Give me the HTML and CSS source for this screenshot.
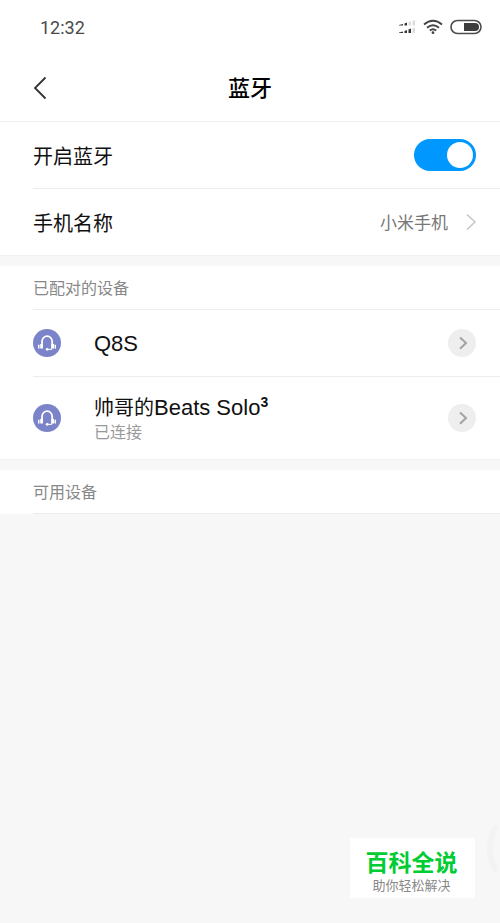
FILE: index.html
```html
<!DOCTYPE html>
<html lang="zh-CN">
<head>
<meta charset="utf-8">
<meta name="viewport" content="width=device-width, initial-scale=1">
<title>蓝牙</title>
<link rel="stylesheet" href="styles.css">
</head>
<body>
<svg class="defs" aria-hidden="true">
  <symbol id="headset" viewBox="0 0 28 28">
    <circle cx="14" cy="14" r="14" fill="#7c84c9"/>
    <path d="M9 19V12.500a5 5.200 0 0 1 10.200 0V19" fill="none" stroke="#fff" stroke-width="1.800"/>
    <path d="M7.200 15h2.700v4.500H7.200zM18.300 15H21v4.500h-2.700zM5 15.800h1.500v3.700H5zM21.500 15.800H23v3.700h-1.500z" fill="#fff"/>
    <path d="M18.700 19v1.400h-4.500" fill="none" stroke="#fff"/>
    <circle cx="14.200" cy="20.300" r="1.400" fill="#fff"/>
  </symbol>
  <symbol id="more" viewBox="0 0 28 28">
    <path d="M12 8.500L18 14l-6 5.700" fill="none" stroke="#a2a2a2" stroke-width="2"/>
  </symbol>
</svg>
<header class="top">
  <div class="status">
    <time>12:32</time>
    <div class="status-icons">
      <svg width="18" height="16" viewBox="0 0 18 16" aria-hidden="true">
        <path d="M1 6l4-1v1.500H1zM6.500 4.500l2.500-1v3H6.500zM1 13.500l4-1V14H1zM6.500 12l2.500-1v3H6.500zM10.500 10.500l2.500-1V14h-2.500z" fill="#333"/>
        <path d="M10.500 3L13 2v4.500h-2.500zM14.500 2L17 1v5.500h-2.500zM14.500 9.500l2.500-1V14h-2.500z" fill="#ddd"/>
      </svg>
      <svg width="20" height="16" viewBox="0 0 20 16" fill="none" stroke="#444" stroke-width="1.900" aria-hidden="true">
        <path d="M1 5.500Q10-2 19 5.500M4 8.700q6-5 12 0M6.800 11.500q3.200-2.600 6.400 0"/>
        <circle cx="10" cy="13.700" r="1.400" fill="#444" stroke="none"/>
      </svg>
      <svg width="32" height="16" viewBox="0 0 32 16" aria-hidden="true">
        <rect x="1" y="1.500" width="30" height="13" rx="6.500" fill="none" stroke="#4c4c4c" stroke-width="1.600"/>
        <path d="M14 4h11a4 4 0 0 1 0 8H14z" fill="#3c3c3c"/>
      </svg>
    </div>
  </div>
  <div class="nav">
    <button class="back" aria-label="返回">
      <svg width="14" height="24" viewBox="0 0 14 24" aria-hidden="true"><path d="M12.500 1.500L2 12l10.500 10.500" fill="none" stroke="#333" stroke-width="1.800"/></svg>
    </button>
    <h1>蓝牙</h1>
  </div>
</header>
<main>
  <section class="group">
    <div class="row">
      <label class="name" for="bt">开启蓝牙</label>
      <input class="switch" id="bt" type="checkbox" role="switch" checked>
    </div>
    <a class="row" href="#name">
      <span class="name">手机名称</span>
      <span class="value">小米手机</span>
      <svg width="10" height="16" viewBox="0 0 10 16" aria-hidden="true"><path d="M1 .5L9 8l-8 7.500" fill="none" stroke="#c4c4c4" stroke-width="1.400"/></svg>
    </a>
  </section>
  <section class="group">
    <h2>已配对的设备</h2>
    <div class="row">
      <svg class="icon" aria-hidden="true"><use href="#headset"/></svg>
      <div class="device"><div class="name"><span class="latin">Q8S</span></div></div>
      <button class="more" aria-label="Q8S 详情"><svg class="icon" aria-hidden="true"><use href="#more"/></svg></button>
    </div>
    <div class="row tall">
      <svg class="icon" aria-hidden="true"><use href="#headset"/></svg>
      <div class="device">
        <div class="name">帅哥的<span class="latin">Beats Solo<sup>3</sup></span></div>
        <div class="state">已连接</div>
      </div>
      <button class="more" aria-label="Beats Solo 3 详情"><svg class="icon" aria-hidden="true"><use href="#more"/></svg></button>
    </div>
  </section>
  <section class="group last">
    <h2>可用设备</h2>
  </section>
</main>
<aside class="brand">
  <strong>百科全说</strong>
  <span>助你轻松解决</span>
</aside>
<svg class="edge" width="14" height="48" viewBox="0 0 14 48" aria-hidden="true"><path d="M9 3Q-1 24 9 44" fill="none" stroke="#f3f3f3" stroke-width="6" stroke-linecap="round"/></svg>
</body>
</html>
```
FILE: styles.css
```css
* { box-sizing: border-box; }
body {
  margin: 0;
  min-height: 100vh;
  background: #f7f7f7;
  color: #111;
  font-family: "Liberation Sans", "Noto Sans CJK SC", sans-serif;
}
h1, h2 { margin: 0; }
button { padding: 0; border: 0; background: none; }
.defs { position: absolute; width: 0; height: 0; }
.top { background: #fff; border-bottom: 1px solid #efefef; }
.status {
  display: flex;
  align-items: center;
  justify-content: space-between;
  height: 54px;
  padding: 0 18px 0 40px;
  font: 18px/24px Roboto, sans-serif;
  color: #4a4a4a;
}
.status time { padding-top: 2px; }
.status-icons { display: flex; gap: 7px; }
.nav {
  display: grid;
  grid-template-columns: 1fr auto 1fr;
  align-items: center;
  height: 67px;
  padding: 0 33px;
}
.back { display: flex; justify-self: start; }
h1 { padding-top: 2px; font-size: 22px; line-height: 32px; font-weight: 500; color: #000; }
.group {
  margin-bottom: 11px;
  background: #fff;
  box-shadow: 0 1px #f1f1f1;
}
.last { margin-bottom: 0; box-shadow: none; }
.row {
  display: flex;
  align-items: center;
  height: 67px;
  margin-left: 33px;
  padding-right: 24px;
  border-bottom: 1px solid #ececec;
  color: inherit;
  text-decoration: none;
}
.row:last-child { height: 66px; border-bottom: 0; }
.row.tall { height: 82px; }
.name { flex: 1; padding-top: 4px; font-size: 20px; line-height: 28px; }
.device .name { padding-top: 2px; }
.device .name:not(:last-child) { padding-top: 4px; line-height: 26px; }
.latin { font-size: 22px; }
sup { font-size: 14px; font-weight: 700; line-height: 0; vertical-align: 8px; }
.value { margin-right: 18px; padding-top: 4px; font-size: 17px; line-height: 24px; color: #777; }
.switch {
  appearance: none;
  width: 62px;
  height: 32px;
  margin: 0;
  padding: 3px;
  border-radius: 16px;
  background: #ccc;
}
.switch::before {
  content: "";
  display: block;
  width: 26px;
  height: 26px;
  border-radius: 50%;
  background: #fff;
}
.switch:checked { background: #0098ff; }
.switch:checked::before { margin-left: auto; }
h2 {
  height: 44px;
  margin-left: 33px;
  border-bottom: 1px solid #ececec;
  font-size: 16px;
  line-height: 46px;
  font-weight: 400;
  color: #888;
}
.icon { display: block; width: 28px; height: 28px; }
.device { flex: 1; margin-left: 33px; }
.state { font-size: 16px; line-height: 24px; color: #999; }
.more { border-radius: 50%; background: #eee; }
.brand {
  position: fixed;
  right: 25px;
  bottom: 25px;
  width: 125px;
  padding: 11px 2px 4px 0;
  background: #fff;
  text-align: center;
}
.brand strong {
  display: block;
  font-size: 23px;
  line-height: 28px;
  font-weight: 700;
  color: #0c3;
}
.brand span { display: block; font-size: 13px; line-height: 17px; color: #888; }
.edge { position: fixed; right: 0; bottom: 50px; }
```
